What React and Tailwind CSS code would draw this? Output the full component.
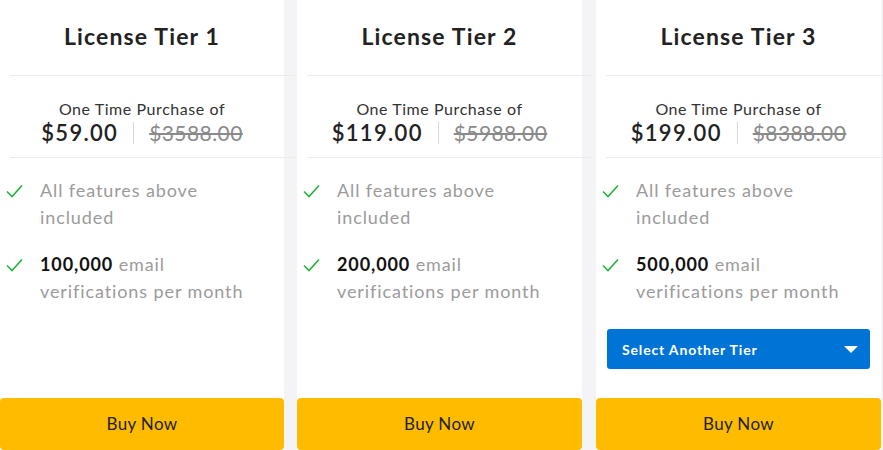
import React from "react";

const tiers = [
  { name: "License Tier 1", price: "$59.00", old: "$3588.00", count: "100,000", w: "w-[284px]" },
  { name: "License Tier 2", price: "$119.00", old: "$5988.00", count: "200,000", w: "w-[285px]" },
  { name: "License Tier 3", price: "$199.00", old: "$8388.00", count: "500,000", w: "w-[285px]", select: true },
];

function Check() {
  return (
    <svg width="17" height="14" viewBox="0 0 17 14" className="shrink-0 mt-[2px]">
      <path d="M1 7.5 L6 12.5 L16 1.5" fill="none" stroke="#22b33a" strokeWidth="1.6" />
    </svg>
  );
}

function Card({ t }) {
  return (
    <div className={`${t.w} shrink-0 bg-white flex flex-col h-[450px]`}>
      <div className="h-[75px] flex items-center justify-center pb-[2px] text-[23px] font-bold tracking-[0.05em] text-[#222]">
        {t.name}
      </div>
      <div className="ml-[10px] w-[285px] h-px bg-[#ebebeb] relative z-10" />
      <div className="h-[81px] flex flex-col items-center pt-[24px]">
        <div className="text-[16px] leading-[18px] tracking-[0.035em] text-[#333]">One Time Purchase of</div>
        <div className="flex items-center mt-[1px]">
          <span className="text-[22px] leading-[28px] font-semibold tracking-[0.06em] text-[#222]">{t.price}</span>
          <span className="mx-[15px] w-px h-[22px] bg-[#d8d8d8]" />
          <span className="text-[21px] leading-[28px] tracking-[0.02em] text-[#8a8a8a] line-through decoration-[#8a8a8a]">{t.old}</span>
        </div>
      </div>
      <div className="ml-[10px] w-[285px] h-px bg-[#ebebeb] relative z-10" />
      <div className="flex flex-col gap-[25px] pl-[6px] pt-[24px] text-[18px] leading-[27px] tracking-[0.05em] text-[#9b9b9b]">
        <div className="flex gap-[17px]">
          <Check />
          <div className="w-[220px] mt-[-5px]">All features above included</div>
        </div>
        <div className="flex gap-[17px]">
          <Check />
          <div className="w-[220px] mt-[-5px]">
            <span className="font-bold text-[#111]">{t.count}</span> email verifications per month
          </div>
        </div>
      </div>
      {t.select && (
        <div className="mt-[24px] ml-[11px] w-[263px] h-[40px] rounded-[3px] bg-[#0074d6] flex items-center justify-between pl-[15px] pr-[12px] text-white text-[14px] font-bold tracking-[0.06em]">
          <span>Select Another Tier</span>
          <svg width="14" height="7" viewBox="0 0 14 7"><path d="M0 0 L14 0 L7 7 Z" fill="#fff" /></svg>
        </div>
      )}
      <div className="mt-auto h-[52px] rounded-[4px] bg-[#ffbb00] flex items-center justify-center text-[17px] tracking-[0.02em] text-[#222]">
        Buy Now
      </div>
    </div>
  );
}

export default function App() {
  return (
    <div className="w-[883px] h-[450px] overflow-hidden bg-[#f4f4f6] flex" style={{ fontFamily: "Lato, 'Open Sans', sans-serif" }}>
      <Card t={tiers[0]} />
      <div className="w-[13px] shrink-0" />
      <Card t={tiers[1]} />
      <div className="w-[14px] shrink-0" />
      <Card t={tiers[2]} />
    </div>
  );
}
